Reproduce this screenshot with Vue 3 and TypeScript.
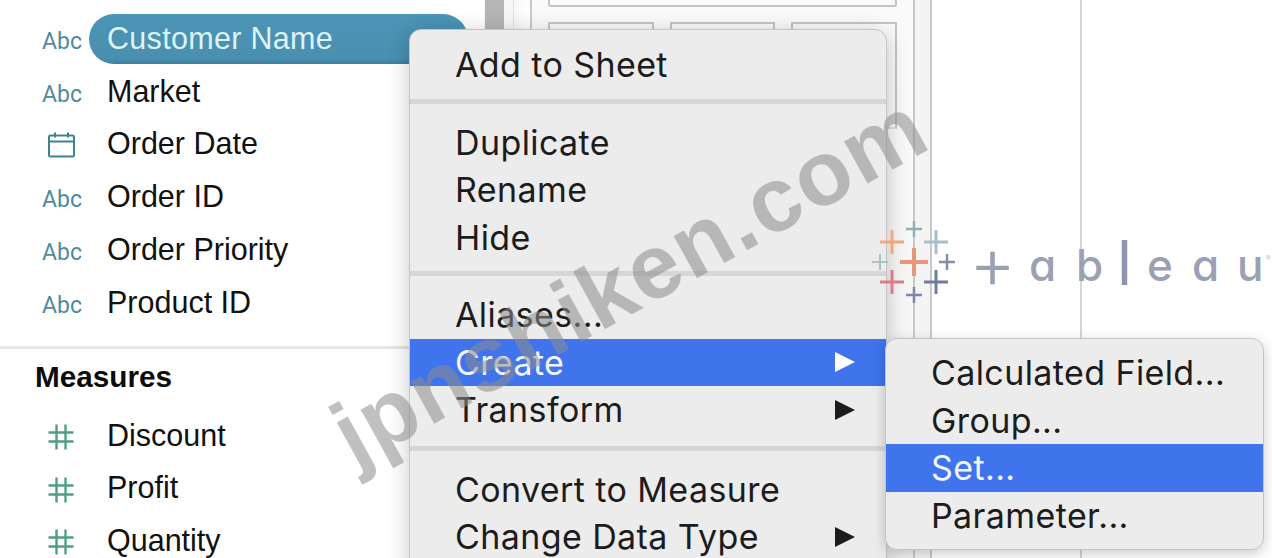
<script setup lang="ts">
type Field = { name: string; icon: 'abc' | 'date' | 'hash'; selected?: boolean }
type MenuItem = { label: string; active?: boolean; arrow?: boolean }

const dimensions: Field[] = [
  { name: 'Customer Name', icon: 'abc', selected: true },
  { name: 'Market', icon: 'abc' },
  { name: 'Order Date', icon: 'date' },
  { name: 'Order ID', icon: 'abc' },
  { name: 'Order Priority', icon: 'abc' },
  { name: 'Product ID', icon: 'abc' },
]
const measures: Field[] = [
  { name: 'Discount', icon: 'hash' },
  { name: 'Profit', icon: 'hash' },
  { name: 'Quantity', icon: 'hash' },
]
const menuGroups: MenuItem[][] = [
  [{ label: 'Add to Sheet' }],
  [{ label: 'Duplicate' }, { label: 'Rename' }, { label: 'Hide' }],
  [
    { label: 'Aliases...' },
    { label: 'Create', active: true, arrow: true },
    { label: 'Transform', arrow: true },
  ],
  [{ label: 'Convert to Measure' }, { label: 'Change Data Type', arrow: true }],
]
const subMenu: MenuItem[] = [
  { label: 'Calculated Field...' },
  { label: 'Group...' },
  { label: 'Set...', active: true },
  { label: 'Parameter...' },
]
const crosses = [
  { x: 54, y: 42, r: 14, w: 4, c: '#e8987a' },
  { x: 32, y: 22, r: 12, w: 3, c: '#eeaa78' },
  { x: 54, y: 9, r: 8, w: 2.5, c: '#8fb0b5' },
  { x: 76, y: 22, r: 12, w: 3, c: '#a6bfc9' },
  { x: 20, y: 42, r: 8, w: 2, c: '#a9c3c5' },
  { x: 87, y: 42, r: 8, w: 2.5, c: '#858ca6' },
  { x: 32, y: 62, r: 12, w: 3, c: '#d97d86' },
  { x: 76, y: 62, r: 12, w: 3, c: '#6f7c9a' },
  { x: 54, y: 75, r: 8, w: 2.5, c: '#7f86a9' },
]
</script>

<template>
  <div class="screen">
    <aside class="data-pane">
      <ul class="field-list dims">
        <li v-for="f in dimensions" :key="f.name" class="field">
          <span v-if="f.icon === 'abc'" class="abc">Abc</span>
          <svg v-else class="ico" width="28" height="28" viewBox="0 0 28 28" fill="none" stroke="#3f8290" stroke-width="2">
            <rect x="2" y="4.5" width="25" height="21" rx="1.5" />
            <path d="M2 10.5h25M8 1.5v5M21 1.5v5" />
          </svg>
          <span class="field-name" :class="{ selected: f.selected }">{{ f.name }}</span>
        </li>
      </ul>
      <div class="divider"></div>
      <h3 class="section-title">Measures</h3>
      <ul class="field-list measures">
        <li v-for="f in measures" :key="f.name" class="field">
          <svg class="ico hash" width="28" height="28" viewBox="0 0 28 28" fill="none" stroke="#4f9f82" stroke-width="2.4">
            <path d="M9.5 1.5v25M18.5 1.5v25M1.500 9.500h25M1.500 18.500h25" />
          </svg>
          <span class="field-name">{{ f.name }}</span>
        </li>
      </ul>
    </aside>

    <div class="scroll-col"><div class="thumb"></div></div>

    <div class="shelf-col">
      <div class="shelf-top"></div>
      <div class="shelf-row">
        <div class="shelf-card"></div>
        <div class="shelf-card"></div>
        <div class="shelf-card"></div>
      </div>
    </div>

    <div class="thin-col"></div>
    <div class="canvas-col"></div>
    <div class="canvas-rest"></div>

    <!-- context menu -->
    <div class="menu">
      <template v-for="(group, i) in menuGroups" :key="i">
        <div v-if="i > 0" class="menu-sep" :class="{ last: i === menuGroups.length - 1 }"></div>
        <div v-for="item in group" :key="item.label" class="menu-item" :class="{ active: item.active }">
          <span>{{ item.label }}</span>
          <i v-if="item.arrow" class="arrow"></i>
        </div>
      </template>
    </div>

    <div class="submenu">
      <div v-for="item in subMenu" :key="item.label" class="menu-item" :class="{ active: item.active }">
        <span>{{ item.label }}</span>
      </div>
    </div>

    <!-- logo -->
    <svg class="logo-mark" width="100" height="90" viewBox="0 0 100 90" fill="none">
      <path
        v-for="(c, i) in crosses"
        :key="i"
        :d="`M${c.x - c.r} ${c.y}h${c.r * 2}M${c.x} ${c.y - c.r}v${c.r * 2}`"
        :stroke="c.c"
        :stroke-width="c.w"
      />
    </svg>
    <div class="logo-word">
      <span class="t">+</span><span class="a1">a</span><span class="b">b</span><span class="l">l</span><span>e</span><span>a</span><span>u</span><small>®</small>
    </div>

    <div class="watermark">jpnshiken.com</div>
  </div>
</template>

<style scoped>
.screen {
  position: relative;
  display: flex;
  width: 1272px;
  height: 558px;
  overflow: hidden;
  background: #ffffff;
  font-family: "Liberation Sans", Arial, sans-serif;
}
.data-pane {
  width: 484px;
  flex: none;
  padding-top: 12px;
  box-sizing: border-box;
}
.field-list {
  list-style: none;
  margin: 0;
  padding: 0;
}
.dims {
  position: relative;
  z-index: 0;
}
.field {
  position: relative;
  display: flex;
  align-items: center;
  box-sizing: border-box;
  height: 52.800px;
  padding: 0 0 0 107px;
  font-size: 30.500px;
  color: #111111;
}
.field-name.selected {
  color: #def3f7;
  letter-spacing: 0.3px;
}
.field-name.selected::before {
  content: "";
  position: absolute;
  z-index: -1;
  left: 89px;
  top: 2px;
  width: 379px;
  height: 50px;
  border-radius: 25px;
  background: linear-gradient(#4b95b6, #4a8fb0 90%, #3d7f9e);
}
.abc {
  position: absolute;
  left: 42px;
  top: 16px;
  font-family: Roboto, sans-serif;
  font-size: 23px;
  color: #4f8a9e;
}
.ico {
  position: absolute;
  left: 47px;
  top: 13px;
}
.ico.hash {
  top: 14px;
}
.divider {
  height: 3px;
  margin-top: 17px;
  background: #e6e6e6;
}
.section-title {
  margin: 11px 0 0 35px;
  font-size: 29.700px;
  line-height: 34px;
  font-weight: 700;
  color: #0c0c0c;
}
.measures {
  margin-top: 15px;
}
.scroll-col {
  position: relative;
  width: 48px;
  flex: none;
  box-sizing: border-box;
  padding-left: 1px;
  background: linear-gradient(90deg, #f6f6f6 0, #f6f6f6 60%, #ffffff 100%);
  border-right: 2px solid #c9c9c9;
}
.thumb {
  width: 19px;
  height: 60px;
  background: #b5b5b5;
  border-right: 9px solid #f6f6f6;
  box-shadow: 1px 0 0 #e2e2e2;
}
.shelf-col {
  width: 383px;
  flex: none;
  box-sizing: border-box;
  padding: 0 16px 0 16px;
  border-right: 2px solid #c8c8c8;
  background: linear-gradient(#fafafa, #f3f3f3);
}
.shelf-top {
  height: 5px;
  border: 2px solid #c4c4c4;
  border-top: 0;
  border-radius: 0 0 3px 3px;
}
.shelf-row {
  display: flex;
  gap: 16px;
  margin-top: 15px;
}
.shelf-card {
  flex: 1;
  height: 103px;
  border: 2px solid #c4c4c4;
  border-bottom-color: #dddddd;
}
.thin-col {
  width: 17px;
  flex: none;
  box-sizing: border-box;
  background: #f4f4f4;
  border-right: 2px solid #c8c8c8;
}
.canvas-col {
  width: 150px;
  flex: none;
  box-sizing: border-box;
  border-right: 2px solid #d4d4d4;
}
.canvas-rest {
  flex: 1;
}
.menu,
.submenu {
  position: absolute;
  box-sizing: border-box;
  background: #ececec;
  font-family: Inter, sans-serif;
  color: #1c1c1c;
  border: 1px solid #c4c4c4;
}
.menu {
  left: 409px;
  top: 29px;
  width: 478px;
  height: 560px;
  padding-top: 11px;
  border-radius: 12px;
  box-shadow: 0 4px 22px rgba(0, 0, 0, 0.22);
}
.submenu {
  left: 885px;
  top: 338px;
  width: 379px;
  height: 212px;
  padding-top: 10px;
  border-radius: 12px;
  box-shadow: 0 4px 14px rgba(0, 0, 0, 0.2);
}
.menu-item {
  display: flex;
  align-items: center;
  justify-content: space-between;
  box-sizing: border-box;
  height: 47.500px;
  padding: 0 31px 0 45px;
  font-size: 34px;
  letter-spacing: 0.4px;
  line-height: 45px;
}
.menu-item.active {
  background: #3f74ed;
  color: #f2f6ff;
}
.menu-sep {
  height: 5px;
  margin: 10px 0 15px;
  background: #d6d6d6;
}
.menu-sep.last {
  margin: 12.500px 0 14.500px;
}
.arrow {
  width: 0;
  height: 0;
  border-left: 20px solid #1c1c1c;
  border-top: 10px solid transparent;
  border-bottom: 10px solid transparent;
}
.active .arrow {
  border-left-color: #ffffff;
}
.logo-mark {
  position: absolute;
  left: 860px;
  top: 220px;
}
.logo-word {
  position: absolute;
  left: 975px;
  top: 226px;
  display: flex;
  align-items: baseline;
  font-family: Inter, sans-serif;
  font-feature-settings: "cv11";
  font-size: 44px;
  font-weight: 500;
  line-height: 58px;
  color: #9aa1b4;
}
.logo-word span {
  width: 24px;
  margin-right: 21px;
  text-align: center;
}
.logo-word .t {
  width: 36px;
  margin: 0 24px 0 -6px;
  font-size: 72px;
  font-weight: 300;
  transform: translateY(7px);
}
.logo-word .a1 {
  margin-right: 23px;
}
.logo-word .b {
  margin-right: 17px;
}
.logo-word .l {
  width: 5px;
  margin-right: 25px;
  font-size: 62px;
  font-weight: 400;
  color: #8d95ab;
  transform: translateY(4px);
}
.logo-word small {
  margin-left: -16px;
  font-size: 7px;
  color: #c4c8d2;
  transform: translateY(-20px);
}
.watermark {
  position: absolute;
  left: 298px;
  top: 230px;
  transform: rotate(-29deg);
  font-family: "Liberation Sans", Arial, sans-serif;
  font-weight: 700;
  font-size: 91px;
  letter-spacing: 2px;
  line-height: 100px;
  white-space: nowrap;
  color: rgba(140, 140, 140, 0.55);
  pointer-events: none;
}
</style>
